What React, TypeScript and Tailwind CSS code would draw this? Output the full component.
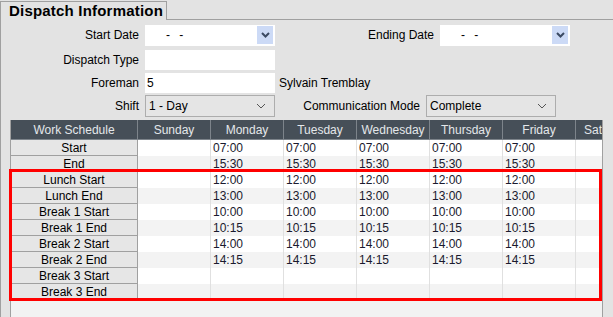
import React from 'react';

const days = ['Sunday', 'Monday', 'Tuesday', 'Wednesday', 'Thursday', 'Friday', 'Saturday'];

const rows: { label: string; time: string }[] = [
  { label: 'Start', time: '07:00' },
  { label: 'End', time: '15:30' },
  { label: 'Lunch Start', time: '12:00' },
  { label: 'Lunch End', time: '13:00' },
  { label: 'Break 1 Start', time: '10:00' },
  { label: 'Break 1 End', time: '10:15' },
  { label: 'Break 2 Start', time: '14:00' },
  { label: 'Break 2 End', time: '14:15' },
  { label: 'Break 3 Start', time: '' },
  { label: 'Break 3 End', time: '' },
];

const BoldChevron = () => (
  <svg width="9" height="6" viewBox="0 0 9 6">
    <path d="M1 1 L4.5 4.5 L8 1" stroke="#3b4a63" strokeWidth="2" fill="none" />
  </svg>
);

const ThinChevron = () => (
  <svg width="10" height="6" viewBox="0 0 10 6">
    <path d="M1 1 L5 5 L9 1" stroke="#555" strokeWidth="1" fill="none" />
  </svg>
);

function DateBox() {
  return (
    <div className="w-[130px] h-[21px] bg-white flex items-center justify-between pl-[21px] pr-[2px]">
      <span className="tracking-[3px]">- -</span>
      <div className="w-[16px] h-[18px] bg-[#ccdaf6] flex items-center justify-center">
        <BoldChevron />
      </div>
    </div>
  );
}

function Combo({ value }: { value: string }) {
  return (
    <div className="w-[130px] h-[22px] bg-[#e5e5e5] border border-[#adadad] flex items-center justify-between pl-[3px] pr-[8px]">
      <span>{value}</span>
      <ThinChevron />
    </div>
  );
}

export default function App() {
  return (
    <div className="w-[613px] h-[317px] bg-[#e3e3e3] relative overflow-hidden text-[12px] text-black font-['Liberation_Sans',Arial,sans-serif]">
      {/* tab strip */}
      <div className="flex h-[20px]">
        <div className="mt-[1px] h-[19px] w-[167px] border-l border-t border-r border-[#a0a0a0] pl-[8px] text-[15px] tracking-[0.2px] font-bold leading-[18px]">
          Dispatch Information
        </div>
        <div className="flex-1 border-b border-[#a0a0a0]" />
      </div>

      <div className="border-l border-[#a0a0a0] h-[297px] flex flex-col">
        {/* form */}
        <div className="flex items-center mt-[4px] h-[22px]">
          <div className="w-[138px] text-right">Start Date</div>
          <div className="ml-[6px]"><DateBox /></div>
          <div className="w-[159px] text-right">Ending Date</div>
          <div className="ml-[6px]"><DateBox /></div>
        </div>
        <div className="flex items-center mt-[4px] h-[20px]">
          <div className="w-[138px] text-right">Dispatch Type</div>
          <div className="ml-[6px] w-[130px] h-[20px] bg-white" />
        </div>
        <div className="flex items-center mt-[3px] h-[20px]">
          <div className="w-[138px] text-right">Foreman</div>
          <div className="ml-[6px] w-[130px] h-[20px] bg-white pl-[2px] leading-[20px]">5</div>
          <div className="ml-[4px]">Sylvain Tremblay</div>
        </div>
        <div className="flex items-center mt-[2px] h-[22px]">
          <div className="w-[138px] text-right">Shift</div>
          <div className="ml-[6px]"><Combo value="1 - Day" /></div>
          <div className="w-[145px] text-right">Communication Mode</div>
          <div className="ml-[6px]"><Combo value="Complete" /></div>
        </div>

        {/* grid */}
        <div className="ml-[9px] mt-[3px] w-[593px] flex-1 bg-[#f2f2f2] border-l border-r border-[#a0a0a0]">
          <div className="grid grid-cols-[127px_73px_73px_73px_73px_73px_73px_26px]">
            <div className="h-[20px] bg-[#464f58] text-[#e4e7ea] border-r border-b border-[#7d848b] flex items-center justify-center">
              Work Schedule
            </div>
            {days.map((d) => (
              <div
                key={d}
                className={`h-[20px] bg-[#464f58] text-[#e4e7ea] border-b border-[#7d848b] flex items-center whitespace-nowrap overflow-hidden ${d === 'Saturday' ? 'pl-[8px]' : 'border-r justify-center'}`}
              >
                {d}
              </div>
            ))}
            {rows.map((r, i) => (
              <React.Fragment key={r.label}>
                <div className="h-[16px] bg-[#e6e6e6] border-r border-b border-[#a0a0a0] flex items-center justify-center leading-none">
                  {r.label}
                </div>
                {days.map((d) => {
                  const weekday = d !== 'Sunday' && d !== 'Saturday';
                  return (
                    <div
                      key={d}
                      className={`h-[16px] pl-[2px] leading-[16px] text-[#1a1a2e] ${d === 'Saturday' ? '' : 'border-r border-[#e0e0e0]'} ${i % 2 === 0 ? 'bg-white' : 'bg-[#f3f3f3]'}`}
                    >
                      {weekday ? r.time : ''}
                    </div>
                  );
                })}
              </React.Fragment>
            ))}
          </div>
        </div>
      </div>

      {/* highlight overlay */}
      <div className="absolute left-[9px] top-[169px] w-[593px] h-[132px] border-[3px] border-[#ff0000] pointer-events-none" />
    </div>
  );
}
